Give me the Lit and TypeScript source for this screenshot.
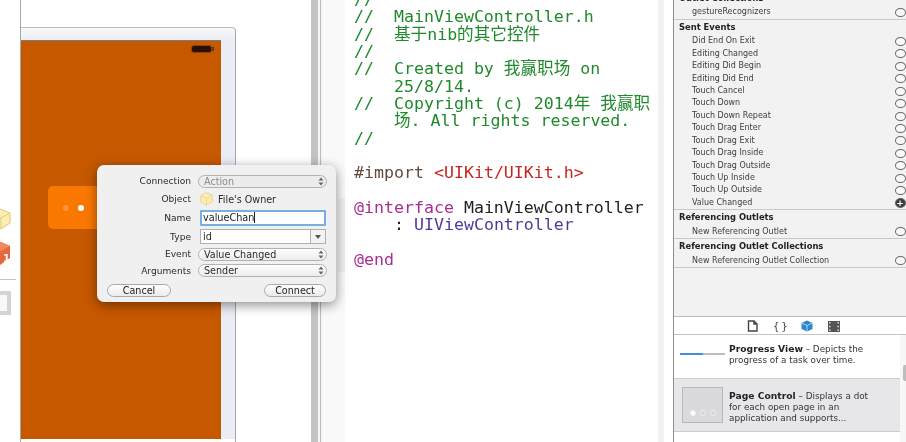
import { LitElement, html, css, svg } from "lit";
import { customElement } from "lit/decorators.js";

const sent = ["Did End On Exit","Editing Changed","Editing Did Begin","Editing Did End","Touch Cancel","Touch Down","Touch Down Repeat","Touch Drag Enter","Touch Drag Exit","Touch Drag Inside","Touch Drag Outside","Touch Up Inside","Touch Up Outside"];

const yellowCube = svg`<path d="M1 6 L9 1 L19 5 L19 15 L10 21 L1 16Z" fill="#fbeeb0" stroke="#dcc77a" stroke-width="1"/><path d="M1 6 L10 10 L19 5 M10 10 V21" fill="none" stroke="#e0cd86" stroke-width="1"/>`;

@customElement("app-root")
export class AppRoot extends LitElement {
  static styles = css`
    :host { display: block; width: 906px; height: 442px; overflow: hidden; background: #fff; }
    .root { position: relative; display: flex; width: 906px; height: 442px; overflow: hidden; font-family: "DejaVu Sans", sans-serif; filter: blur(0.4px); }
    .dock { width: 20px; flex: none; display: flex; flex-direction: column; padding-top: 206px; box-sizing: border-box; background: #fff; }
    .dock svg { display: block; flex: none; }
    .dock-cube { margin-left: -9px; }
    .dock-red { margin-top: 9px; margin-left: -9px; }
    .dock-rule { height: 1px; width: 16px; background: #c4c4c4; margin-top: 13px; flex: none; }
    .dock-box { width: 11px; height: 24px; margin-top: 11px; box-sizing: border-box; border: 4px solid #d4d4d4; border-left: none; background: #f8f8f8; flex: none; }
    .canvas { position: relative; width: 291px; flex: none; border-left: 1px solid #a9a9a9; box-sizing: border-box; background: #fff; padding-top: 27px; }
    .frame { width: 215px; height: 415px; box-sizing: border-box; border-top: 1px solid #bcbcbc; border-right: 1px solid #a8a8b4; border-top-right-radius: 4px; background: linear-gradient(#f6f7fa 0, #ebedf4 14px); padding-right: 14px; padding-top: 12px; }
    .screen { position: relative; height: 399px; background: #c65800; border-top: 1px solid #7a7a7a; box-sizing: border-box; }
    .strip { height: 3px; background: #fff; margin-right: -14px; }
    .battery { position: absolute; right: 9px; top: 4px; width: 21px; height: 8px; border-radius: 3px; background: #2a0f04; border: 1px solid #8f4208; box-sizing: border-box; }
    .battery::after { content: ""; position: absolute; right: -3px; top: 1px; width: 2px; height: 4px; background: #6b3206; }
    .pager { position: absolute; left: 27px; top: 145px; width: 60px; height: 43px; border-radius: 5px; background: #fb7800; display: flex; align-items: center; gap: 9px; padding-left: 15px; box-sizing: border-box; }
    .dot { width: 6px; height: 6px; border-radius: 50%; background: #fff; }
    .dot.dim { background: #ff9238; }
    .splitter { width: 11px; flex: none; display: flex; background: #fff; }
    .splitter .a { width: 7px; background: #c3c3c3; }
    .splitter .b { width: 2px; background: #f6f6f6; }
    .splitter .c { width: 1px; background: #bdbdbd; }
    .splitter .d { width: 1px; background: #f4f4f4; }
    .gutter { width: 23px; flex: none; background: #f9f9f9; display: flex; flex-direction: column; align-items: flex-end; padding-top: 198px; box-sizing: border-box; }
    .gutter i { display: block; width: 7px; height: 74px; background: #efefef; }
    .editor { width: 313px; flex: none; background: #fff; padding: 0 0 0 9px; box-sizing: border-box; overflow: hidden; font-family: "DejaVu Sans Mono", "Noto Sans CJK SC", monospace; font-size: 16.6px; line-height: 17.35px; color: #222; margin: 0; }
    .code { margin-top: -9px; }
    .ln { white-space: pre; height: 17.35px; }
    .cm { color: #1f8a2c; }
    .pp { color: #64493c; }
    .st { color: #c5261f; }
    .kw { color: #a92d92; }
    .ty { color: #4c3b9c; }
    .gap { width: 15px; flex: none; display: flex; background: #fff; }
    .gap i { display: block; width: 6px; background: #f1f1f1; }
    .insp { width: 233px; flex: none; border-left: 1px solid #8f8f8f; box-sizing: border-box; background: #f2f2f2; display: flex; flex-direction: column; height: 442px; color: #3c3c3c; font-size: 8px; }
    .sections { flex: 1; margin-top: -9px; }
    .sec { border-bottom: 1.3px solid #c9c9c9; }
    .sec-h { height: 15.4px; line-height: 15.4px; padding-left: 5px; font-weight: bold; font-size: 8.4px; color: #222; }
    .row { height: 12.45px; line-height: 12.45px; padding-left: 18px; display: flex; justify-content: space-between; align-items: center; padding-right: 0.5px; }
    .circ { width: 11px; height: 9px; border-radius: 50%; border: 1px solid #666; box-sizing: border-box; background: #fafafa; flex: none; }
    .circ.on { background: #3a3a3a; position: relative; height: 10px; }
    .circ.on::after { content: "+"; position: absolute; left: 0; right: 0; top: -1px; color: #fff; font-size: 9px; line-height: 10px; text-align: center; font-weight: bold; }
    .tabs { flex: none; height: 19px; box-sizing: border-box; background: #fff; border-top: 1.3px solid #bdbdbd; border-bottom: 1.3px solid #c4c4c4; display: flex; align-items: center; justify-content: center; gap: 15px; padding-left: 7px; padding-top: 1px; }
    .tabs svg { display: block; }
    .tabs .t { font-size: 10px; color: #444; width: 13px; text-align: center; letter-spacing: 2px; }
    .lib { flex: none; height: 107px; display: flex; position: relative; background: #f7f7f7; }
    .list { width: 226px; flex: none; background: #fff; }
    .item { display: flex; border-bottom: 1.3px solid #cdcdcd; box-sizing: border-box; font-size: 8.8px; line-height: 11px; color: #333; }
    .item.p { height: 44px; background: #fff; padding-top: 8px; }
    .item.c { height: 53px; background: #e7e7ea; padding-top: 11px; }
    .item b { font-size: 9.2px; color: #222; }
    .art { width: 55px; flex: none; }
    .bar { width: 45px; height: 2px; margin: 10px 0 0 6px; background: #bcbcbc; flex: none; }
    .bar i { display: block; width: 23px; height: 2px; background: #3f8fdc; }
    .thumb { width: 41px; height: 36px; margin: -3px 6px 0 8px; flex: none; border: 1px solid #b8b8b8; box-sizing: border-box; background: #dadadd; display: flex; align-items: flex-end; justify-content: center; gap: 4px; padding-bottom: 6px; }
    .thumb i { display: block; width: 6px; height: 6px; border-radius: 50%; background: #d4d4d6; border: 1px solid #f0f0f0; box-sizing: border-box; }
    .thumb i.w { background: #fff; }
    .desc { width: 162px; flex: none; }
    .lib-scroll { position: absolute; right: 0; top: 30px; width: 3px; height: 16px; background: #bdbdbd; border-radius: 2px 0 0 2px; }

    .pop { position: absolute; left: 97px; top: 165px; width: 239px; height: 137px; box-sizing: border-box; background: #f0f0f0; border-radius: 7px; box-shadow: 0 3px 12px rgba(0,0,0,.45); padding: 7px 9px 0 10px; font-size: 9.1px; color: #2a2a2a; }
    .form { display: grid; grid-template-columns: 84px 128px; column-gap: 7px; grid-template-rows: 18px 18px 19px 19px 16px 17px; align-items: center; }
    .lab { text-align: right; }
    .cap { height: 13px; line-height: 11px; border: 1px solid #b2b2b2; border-radius: 7px; background: linear-gradient(#fff, #ececec); box-sizing: border-box; padding-left: 5px; display: flex; justify-content: space-between; align-items: center; margin-right: -1px; font-size: 9.6px; }
    .cap.off { color: #8c8c8c; background: #ececec; }
    .updn { width: 10px; height: 9px; flex: none; display: block; }
    .owner { display: flex; align-items: center; gap: 4px; margin-left: 1px; font-size: 9.6px; }
    .input { height: 16px; line-height: 13px; box-sizing: border-box; border: 2px solid #79aee2; background: #fff; padding-left: 1px; margin-left: 2px; font-size: 9.7px; color: #222; display: flex; align-items: center; border-radius: 1px; }
    .caret { display: inline-block; width: 1px; height: 11px; background: #222; }
    .combo { height: 15px; box-sizing: border-box; border: 1px solid #b0b0b0; background: #fff; margin-left: 2px; display: flex; align-items: center; padding-left: 2px; justify-content: space-between; font-size: 9.7px; }
    .combo-btn { width: 14px; height: 13px; border-left: 1px solid #b0b0b0; background: #f3f3f3; display: flex; align-items: center; justify-content: center; flex: none; }
    .combo-btn i { display: block; width: 0; height: 0; border-left: 3px solid transparent; border-right: 3px solid transparent; border-top: 4px solid #555; }
    .acts { display: flex; justify-content: space-between; margin-top: 5px; width: 219px; }
    .btn { height: 13px; line-height: 11px; border: 1px solid #a8a8a8; border-radius: 7px; background: linear-gradient(#fff, #ebebeb); box-sizing: border-box; text-align: center; font-size: 9.6px; color: #222; }
    .btn.l { width: 64px; }
    .btn.r { width: 62px; }
  `;

  private updn() {
    return html`<svg class="updn" viewBox="0 0 10 9"><path d="M5 0.5 L7.5 3.5 H2.5Z M5 8.5 L7.5 5.5 H2.5Z" fill="#666"/></svg>`;
  }

  private circ(on = false) {
    return html`<span class="circ ${on ? "on" : ""}"></span>`;
  }

  private row(t: string, on = false) {
    return html`<div class="row"><span>${t}</span>${this.circ(on)}</div>`;
  }

  render() {
    return html`<div class="root">
      <div class="dock">
        <svg class="dock-cube" width="20" height="26" viewBox="0 0 20 22">${yellowCube}</svg>
        <svg class="dock-red" width="20" height="25" viewBox="0 0 20 25">
          <path d="M1 6 L10 1 L19 5 L19 17 L9 24 L1 19Z" fill="#e8673a"/>
          <path d="M1 6 L10 10 L19 5 L10 1Z" fill="#f08a5c"/>
          <text x="12" y="21" font-size="10" font-weight="bold" fill="#fff" font-family="DejaVu Sans">1</text>
        </svg>
        <div class="dock-rule"></div>
        <div class="dock-box"></div>
      </div>

      <div class="canvas">
        <div class="frame">
          <div class="screen">
            <div class="battery"></div>
            <div class="pager"><span class="dot dim"></span><span class="dot"></span></div>
          </div>
          <div class="strip"></div>
        </div>
      </div>

      <div class="splitter"><div class="a"></div><div class="b"></div><div class="c"></div><div class="d"></div></div>
      <div class="gutter"><i></i></div>

      <div class="editor"><div class="code">
        <div class="ln cm">//</div>
        <div class="ln cm">//  MainViewController.h</div>
        <div class="ln cm">//  基于nib的其它控件</div>
        <div class="ln cm">//</div>
        <div class="ln cm">//  Created by 我赢职场 on</div>
        <div class="ln cm">    25/8/14.</div>
        <div class="ln cm">//  Copyright (c) 2014年 我赢职</div>
        <div class="ln cm">    场. All rights reserved.</div>
        <div class="ln cm">//</div>
        <div class="ln"></div>
        <div class="ln"><span class="pp">#import </span><span class="st">&lt;UIKit/UIKit.h&gt;</span></div>
        <div class="ln"></div>
        <div class="ln"><span class="kw">@interface</span> MainViewController</div>
        <div class="ln">    : <span class="ty">UIViewController</span></div>
        <div class="ln"></div>
        <div class="ln kw">@end</div>
      </div></div>

      <div class="gap"><i></i></div>

      <div class="insp">
        <div class="sections">
          <div class="sec"><div class="sec-h">Outlet Collections</div>${this.row("gestureRecognizers")}</div>
          <div class="sec"><div class="sec-h">Sent Events</div>${sent.map((s) => this.row(s))}${this.row("Value Changed", true)}</div>
          <div class="sec"><div class="sec-h">Referencing Outlets</div>${this.row("New Referencing Outlet")}</div>
          <div class="sec"><div class="sec-h">Referencing Outlet Collections</div>${this.row("New Referencing Outlet Collection")}</div>
        </div>
        <div class="tabs">
          <svg width="11" height="12" viewBox="0 0 11 12"><path d="M1.5 1 H7 L10 4 V11 H1.5Z M7 1 V4 H10" fill="#fff" stroke="#444" stroke-width="1.4"/></svg>
          <span class="t">{}</span>
          <svg width="12" height="12" viewBox="0 0 12 12"><path d="M6 .5 L11.5 3 V9 L6 11.5 L.5 9 V3Z" fill="#2f86cf"/><path d="M.5 3 L6 5.5 L11.5 3 M6 5.5 V11.5" fill="none" stroke="#cfe5f7" stroke-width=".8"/></svg>
          <svg width="12" height="11" viewBox="0 0 12 11"><rect width="12" height="11" fill="#555"/><path d="M1 1 H2.5 V2.5 H1Z M1 4.7 H2.5 V6.2 H1Z M1 8.4 H2.5 V9.9 H1Z M9.5 1 H11 V2.5 H9.5Z M9.5 4.7 H11 V6.2 H9.5Z M9.5 8.4 H11 V9.9 H9.5Z" fill="#ddd"/></svg>
        </div>
        <div class="lib">
          <div class="list">
            <div class="item p">
              <div class="art"><div class="bar"><i></i></div></div>
              <div class="desc"><b>Progress View</b> – Depicts the<br>progress of a task over time.</div>
            </div>
            <div class="item c">
              <div class="thumb"><i class="w"></i><i></i><i></i></div>
              <div class="desc"><b>Page Control</b> – Displays a dot<br>for each open page in an<br>application and supports...</div>
            </div>
          </div>
          <div class="lib-scroll"></div>
        </div>
      </div>

      <div class="pop">
        <div class="form">
          <div class="lab">Connection</div>
          <div class="cap off"><span>Action</span>${this.updn()}</div>
          <div class="lab">Object</div>
          <div class="owner"><svg width="15" height="14" viewBox="0 0 20 22">${yellowCube}</svg><span>File's Owner</span></div>
          <div class="lab">Name</div>
          <div class="input"><span>valueChan</span><span class="caret"></span></div>
          <div class="lab">Type</div>
          <div class="combo"><span>id</span><span class="combo-btn"><i></i></span></div>
          <div class="lab">Event</div>
          <div class="cap"><span>Value Changed</span>${this.updn()}</div>
          <div class="lab">Arguments</div>
          <div class="cap"><span>Sender</span>${this.updn()}</div>
        </div>
        <div class="acts"><div class="btn l">Cancel</div><div class="btn r">Connect</div></div>
      </div>
    </div>`;
  }
}
